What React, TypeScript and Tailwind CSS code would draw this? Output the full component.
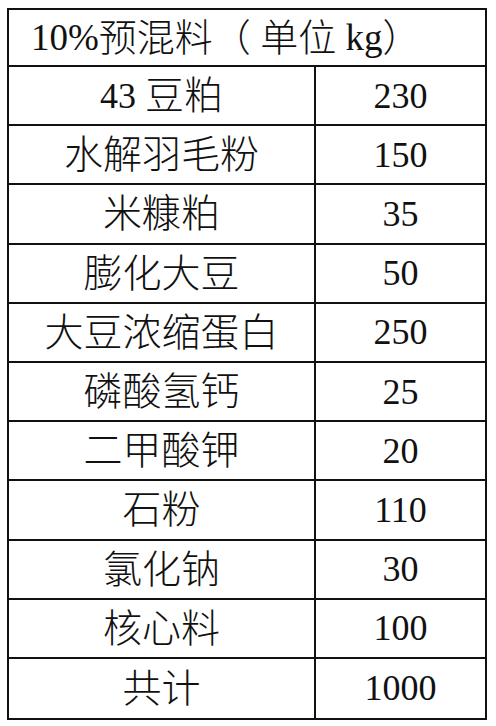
import React from 'react';

const rows: [string, string, string][] = [
  ['43 ', '豆粕', '230'],
  ['', '水解羽毛粉', '150'],
  ['', '米糠粕', '35'],
  ['', '膨化大豆', '50'],
  ['', '大豆浓缩蛋白', '250'],
  ['', '磷酸氢钙', '25'],
  ['', '二甲酸钾', '20'],
  ['', '石粉', '110'],
  ['', '氯化钠', '30'],
  ['', '核心料', '100'],
  ['', '共计', '1000'],
];

const App: React.FC = () => {
  return (
    <div
      className="w-[496px] h-[726px] bg-white pt-[8px] pl-[7px] text-[#111] text-[36px] leading-none"
      style={{ fontFamily: '"Liberation Serif", "Noto Sans CJK SC", serif' }}
    >
      <div className="w-[480px] border-2 border-[#111]">
        <div className="h-[57px] flex items-center pl-[22px] border-b-2 border-[#111] whitespace-pre">
          <span className="text-[37px]">10%</span>
          <span className="text-[38px] font-light">预混料（ 单位</span>
          <span className="text-[37px]"> kg</span>
          <span className="text-[38px] font-light">）</span>
        </div>
        {rows.map(([num, name, qty], i) => (
          <div
            key={name}
            className={`grid grid-cols-[307px_1fr] h-[59.2px] ${i < rows.length - 1 ? 'border-b-2 border-[#111]' : ''}`}
          >
            <div className="flex items-center justify-center border-r-2 border-[#111] whitespace-pre">
              {num && <span>{num}</span>}
              <span className="text-[39px] font-light">{name}</span>
            </div>
            <div className="flex items-center justify-center">{qty}</div>
          </div>
        ))}
      </div>
    </div>
  );
};

export default App;
